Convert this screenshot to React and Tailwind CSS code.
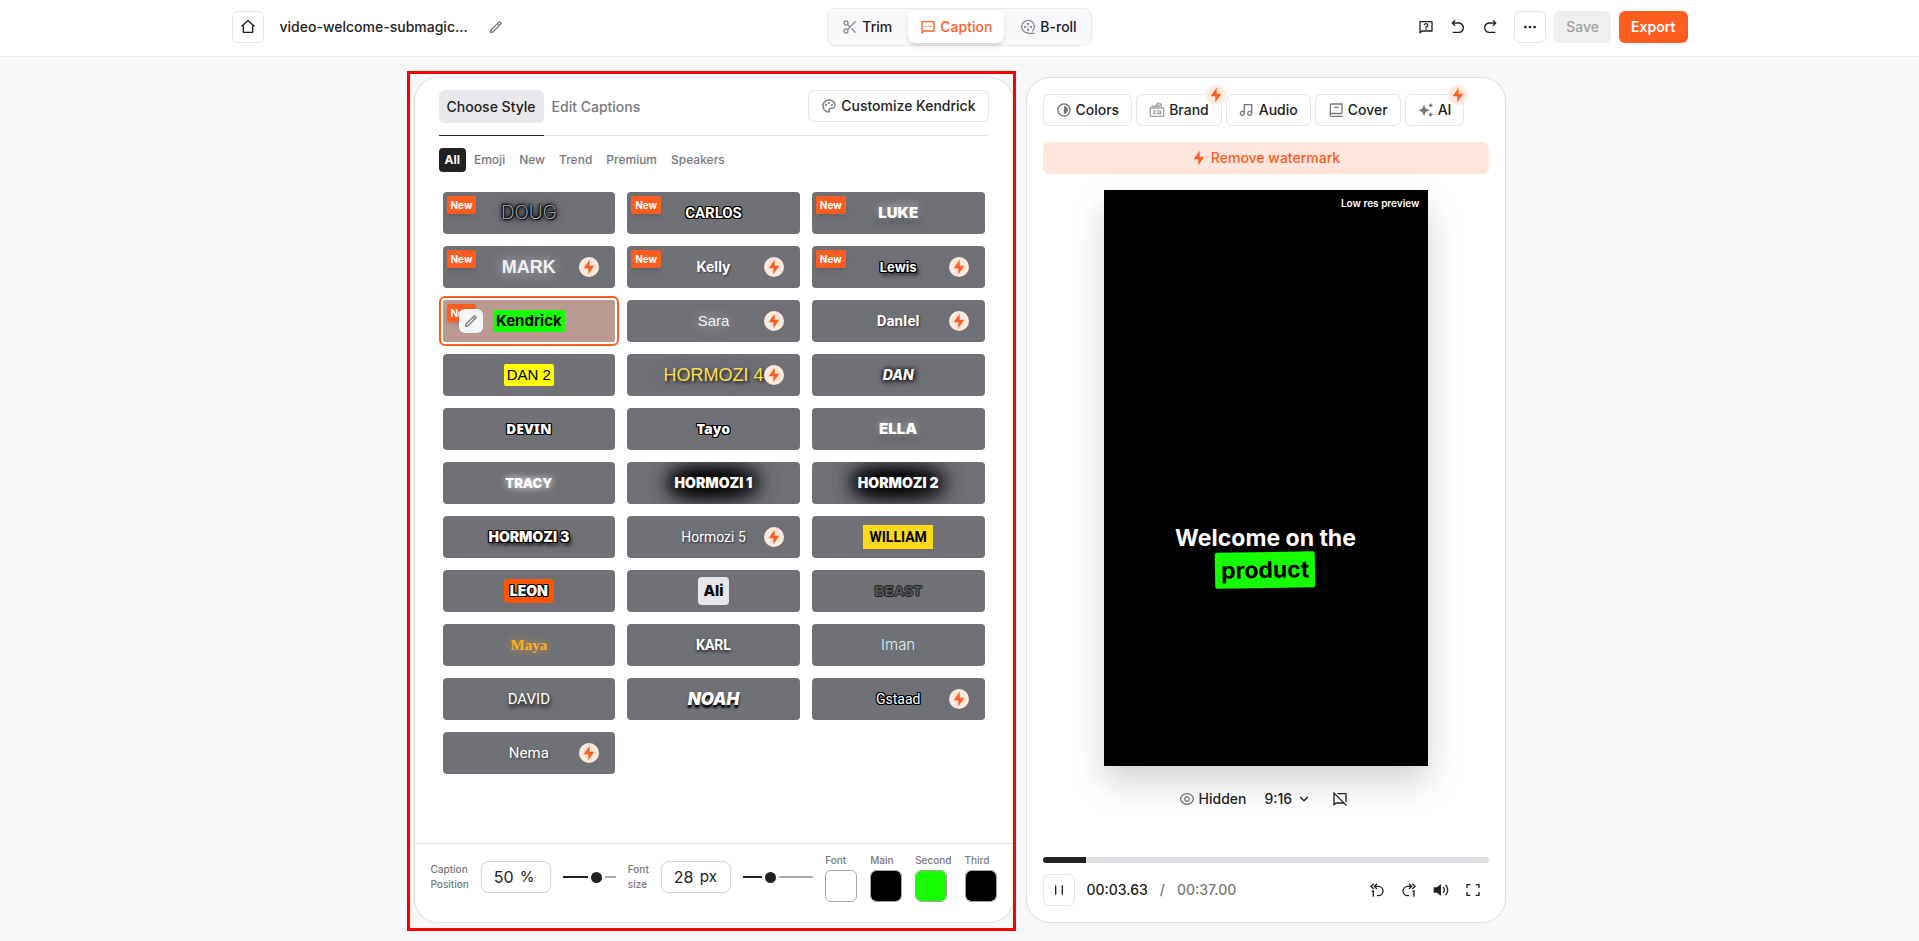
import React, { useState } from "react";
import {
  RiHome2Line,
  RiPencilLine,
  RiScissorsLine,
  RiMessage2Line,
  RiQuestionnaireLine,
  RiArrowGoBackLine,
  RiArrowGoForwardLine,
  RiMoreFill,
  RiPaletteLine,
  RiFlashlightFill,
  RiContrastLine,
  RiMusic2Line,
  RiEyeLine,
  RiArrowDownSLine,
  RiChatOffLine,
  RiPauseLine,
  RiVolumeUpFill,
  RiFullscreenLine,
} from "react-icons/ri";

const iconButton = "flex size-8 items-center justify-center rounded-md text-[#222]";
const outlined = "border border-[#e5e5e8] bg-white";

function ReelIcon() {
  return (
    <svg viewBox="0 0 24 24" className="size-4" fill="none" stroke="currentColor" strokeWidth="2" aria-hidden="true">
      <path d="M12 21a9.500 9.500 0 1 1 6.500-2.500M12 21.500h10" />
      <g fill="currentColor" stroke="none">
        <circle cx="12" cy="7.500" r="1.700" />
        <circle cx="7.500" cy="12" r="1.700" />
        <circle cx="16.500" cy="12" r="1.700" />
        <circle cx="12" cy="16.500" r="1.700" />
        <circle cx="12" cy="12" r="1" />
      </g>
    </svg>
  );
}

function BrandIcon() {
  return (
    <svg viewBox="0 0 24 24" className="size-4 text-[#a5a6ab]" fill="none" stroke="currentColor" strokeWidth="2" aria-hidden="true">
      <path d="M2 9h20v12.500H2z" />
      <path d="M3 9l3-3.500 3 2 4-5.500 5 1 1 6M9 7.500l5-3M12 8l5-3" />
      <path d="M11 13.200H7.500v4H11M13.500 13.200h4v4h-4z" />
    </svg>
  );
}

function CoverIcon() {
  return (
    <svg viewBox="0 0 24 24" className="size-4" fill="none" stroke="currentColor" strokeWidth="2" aria-hidden="true">
      <path d="M21 17V3H5a1.500 1.500 0 0 0-1.500 1.500V19.500A1.500 1.500 0 0 0 5 21.500h17M4 17.300h17M9 8h7" />
    </svg>
  );
}

function SparklesIcon() {
  return (
    <svg viewBox="0 0 24 24" className="size-4" fill="currentColor" aria-hidden="true">
      <path d="M9 4l2.600 5.900L17.500 12.500l-5.900 2.600L9 21l-2.600-5.900L.500 12.500l5.900-2.600z" />
      <path d="M19 1l1.200 2.800L23 5l-2.800 1.200L19 9l-1.200-2.800L15 5l2.800-1.200zM19 15l1.300 2.700L23 19l-2.700 1.300L19 23l-1.300-2.700L15 19l2.700-1.300z" />
    </svg>
  );
}

function BackOneIcon() {
  return (
    <svg viewBox="0 0 24 24" className="size-4" fill="none" stroke="currentColor" strokeWidth="2" aria-hidden="true">
      <path d="M7 2.500L3 6.500l4 4M12 2.500l-4 4 4 4M8.500 6.500H14a7 7 0 0 1 0 14h-2M4 14.500l2.500-1V22" />
    </svg>
  );
}

function ForwardOneIcon() {
  return (
    <svg viewBox="0 0 24 24" className="size-4" fill="none" stroke="currentColor" strokeWidth="2" aria-hidden="true">
      <path d="M17 2.500l4 4-4 4M12 2.500l4 4-4 4M15.500 6.500H10a7 7 0 0 0 0 14h2M17 14.500l2.500-1V22" />
    </svg>
  );
}

function FlashBadge({ className = "" }) {
  return (
    <span className={`flex size-5 items-center justify-center rounded-full bg-[#ffe9dc] text-[#ff5c1f] ${className}`}>
      <RiFlashlightFill className="size-4" />
    </span>
  );
}

const stroke =
  "[text-shadow:1px_0_#000,-1px_0_#000,0_1px_#000,0_-1px_#000,1px_1px_#000,-1px_-1px_#000,1px_-1px_#000,-1px_1px_#000]";
const strokeDrop =
  "[text-shadow:1px_0_#000,-1px_0_#000,0_1px_#000,0_-1px_#000,1px_1px_#000,-1px_-1px_#000,1px_-1px_#000,-1px_1px_#000,2px_3px_4px_#000]";
const halo =
  "[text-shadow:0_0_14px_#000,0_0_16px_#000,0_0_20px_#000,0_0_20px_#000,0_0_24px_#000,0_0_24px_#000,0_0_28px_#000]";
const inter = "font-['Inter',sans-serif]";
const arial = "font-['Liberation_Sans',sans-serif]";
const roboto = "font-['Roboto',sans-serif]";

const STYLES = [
  { name: "DOUG", isNew: true, cls: `${inter} text-[19px] font-extralight text-[#b9bbc0] [text-shadow:1px_1px_1px_#000,-1px_-1px_1px_#000,0_0_3px_#000,0_0_4px_#000,0_0_6px_#000,0_0_8px_#000]` },
  { name: "CARLOS", isNew: true, cls: `${roboto} text-[15px] font-bold text-white ${stroke}` },
  { name: "LUKE", isNew: true, cls: `${inter} text-[15px] font-black text-white [text-shadow:0_-2px_8px_#ffffff88,0_4px_8px_#0006]` },
  { name: "MARK", isNew: true, pro: true, cls: `${arial} text-lg font-bold text-[#f2f2f4] [text-shadow:0_0_14px_#fff8]` },
  { name: "Kelly", isNew: true, pro: true, cls: `${inter} text-sm font-bold text-white [text-shadow:1px_1px_2px_#0008]` },
  { name: "Lewis", isNew: true, pro: true, cls: `${inter} text-[13px] font-bold text-white ${strokeDrop}` },
  { name: "Kendrick", isNew: true, cls: `${inter} rounded-xs bg-[#15ff00] px-[3px] text-[15px] font-bold text-black` },
  { name: "Sara", pro: true, cls: `${arial} text-[15px] font-normal text-[#f2f2f4] [text-shadow:0_0_14px_#fff9]` },
  { name: "DanIel", pro: true, cls: `${roboto} text-[15px] font-bold text-white [text-shadow:1px_1px_2px_#0008]` },
  { name: "DAN 2", cls: `${arial} rounded-xs bg-[#ffff00] px-[3px] text-[15px] text-black` },
  { name: "HORMOZI 4", pro: true, cls: `${arial} text-lg text-[#f7df4a] [text-shadow:2px_2px_3px_#222,0_0_12px_#4a4a7088]` },
  { name: "DAN", cls: `${inter} text-sm font-extrabold italic text-white [text-shadow:0_0_4px_#000,1px_1px_6px_#000]` },
  { name: "DEVIN", cls: `font-['Noto_Sans',sans-serif] text-sm font-black text-white ${stroke}` },
  { name: "Tayo", cls: `font-['Noto_Sans',sans-serif] text-sm font-black text-white ${stroke}` },
  { name: "ELLA", cls: `${inter} text-[15px] font-black text-white [text-shadow:0_0_8px_#ffffff88,0_4px_8px_#0006]` },
  { name: "TRACY", cls: `${inter} text-[13px] font-black text-white [text-shadow:0_0_6px_#fff8,0_0_10px_#fff8]` },
  { name: "HORMOZI 1", cls: `${inter} text-sm font-black text-white ${halo}` },
  { name: "HORMOZI 2", cls: `${inter} text-sm font-black text-white ${halo}` },
  { name: "HORMOZI 3", cls: `${inter} text-sm font-black text-white ${strokeDrop}` },
  { name: "Hormozi 5", pro: true, cls: `${roboto} text-sm text-white [text-shadow:1px_1px_2px_#000a]` },
  { name: "WILLIAM", cls: `${roboto} bg-[#ffd91a] px-1.5 py-px text-sm font-bold text-black` },
  { name: "LEON", cls: `${inter} rounded-sm bg-[#ff5500] px-1.5 py-px text-sm font-black text-white ${stroke}` },
  { name: "Ali", cls: `${inter} rounded-sm bg-[#e7e5e9] px-[5px] py-[3px] text-[15px] font-extrabold text-black` },
  { name: "BEAST", cls: `${arial} text-sm font-bold text-[#55565b] [text-shadow:1px_0_#222,-1px_0_#222,0_1px_#222,0_-1px_#222]` },
  { name: "Maya", cls: "font-['Liberation_Serif',serif] text-[15px] font-bold text-[#ffb01c] [text-shadow:0_0_8px_#ffb01caa]" },
  { name: "KARL", cls: `${roboto} text-sm font-bold text-white [text-shadow:0_2px_3px_#000a]` },
  { name: "Iman", cls: `${inter} text-[15px] font-light text-[#dcf1f4]` },
  { name: "DAVID", cls: `${roboto} text-[15px] text-white [text-shadow:1px_3px_4px_#000]` },
  { name: "NOAH", cls: `${inter} text-[17px] font-black italic text-white [text-shadow:0_3px_2px_#000]` },
  { name: "Gstaad", pro: true, cls: `${roboto} text-sm text-white ${stroke}` },
  { name: "Nema", pro: true, cls: `${roboto} text-[15px] text-white [text-shadow:1px_1px_2px_#0008]` },
];

function StyleCard({ item, selected, onSelect }) {
  return (
    <div className="relative">
      <button
        type="button"
        onClick={onSelect}
        className={`flex h-[42px] w-full items-center justify-center overflow-hidden ${
          selected ? "rounded-xs bg-[#ba9a91] outline-2 outline-offset-2 outline-[#ff5c1f]" : "rounded-sm bg-[#707177]"
        }`}
      >
        <span className={`leading-[22px] whitespace-nowrap ${item.cls}`}>{item.name}</span>
      </button>
      {item.isNew && (
        <span className="pointer-events-none absolute top-1 left-1 rounded-xs bg-[#ff5c1f] px-1 text-[10px] leading-[18px] font-bold text-white shadow-md">
          New
        </span>
      )}
      {selected && (
        <button
          type="button"
          aria-label="Edit style"
          className="absolute top-[9px] left-4 flex size-6 items-center justify-center rounded-md bg-[#f5f5f8] text-[#808085]"
        >
          <RiPencilLine className="size-4" />
        </button>
      )}
      {item.pro && <FlashBadge className="pointer-events-none absolute top-[11px] right-4" />}
    </div>
  );
}

function Slider({ label, value, min, max, onChange, className }) {
  const pct = ((value - min) / (max - min)) * 100;
  return (
    <input
      type="range"
      aria-label={label}
      min={min}
      max={max}
      value={value}
      onChange={(e) => onChange(Number(e.target.value))}
      style={{ background: `linear-gradient(to right, #222 ${pct}%, #a9a9ae ${pct}%)` }}
      className={`h-0.5 min-w-0 cursor-pointer appearance-none [&::-webkit-slider-thumb]:size-[17px] [&::-webkit-slider-thumb]:appearance-none [&::-webkit-slider-thumb]:rounded-full [&::-webkit-slider-thumb]:border-3 [&::-webkit-slider-thumb]:border-white [&::-webkit-slider-thumb]:bg-[#222] ${className}`}
    />
  );
}

function NumberField({ id, value, unit, onChange }) {
  return (
    <span className="flex h-8 w-[70px] shrink-0 items-center rounded-lg border border-[#d4d4da] bg-white pl-3 text-base text-[#222] shadow-xs">
      <input
        id={id}
        type="text"
        inputMode="numeric"
        value={value}
        onChange={(e) => onChange(Number(e.target.value) || 0)}
        className="w-[26px] bg-transparent outline-none"
      />
      <span className="text-[15px]">{unit}</span>
    </span>
  );
}

function ColorField({ label, initial }) {
  const [color, setColor] = useState(initial);
  return (
    <label className="flex flex-col gap-0.5 text-[10px] leading-[15px] font-medium text-[#77787e]">
      {label}
      <input
        type="color"
        value={color}
        onChange={(e) => setColor(e.target.value)}
        className="size-8 cursor-pointer appearance-none rounded-md border border-[#a3a3a8] bg-white p-0 [&::-webkit-color-swatch]:rounded-[5px] [&::-webkit-color-swatch]:border-0 [&::-webkit-color-swatch-wrapper]:p-0"
      />
    </label>
  );
}

function Header() {
  return (
    <header className="border-b border-[#e8e8ef] bg-white">
      <div className="mx-auto grid h-14 max-w-[1456px] grid-cols-[1fr_auto_1fr] items-center pb-0.5">
        <div className="flex items-center">
          <a href="#home" aria-label="Home" className={`${iconButton} ${outlined}`}>
            <RiHome2Line className="size-4" />
          </a>
          <span className="ml-4 text-sm font-medium text-[#222]">video-welcome-submagic...</span>
          <button type="button" aria-label="Rename" className="ml-3 flex size-8 items-center justify-center text-[#808085]">
            <RiPencilLine className="size-4" />
          </button>
        </div>
        <nav className="flex items-center gap-1 rounded-lg border border-[#e8e8ef] bg-[#f8f8fb] p-0.5 text-sm font-medium text-[#1b1b2b]">
          <button type="button" className="flex h-8 items-center gap-1 rounded-lg px-3">
            <RiScissorsLine className="size-4 text-[#8b8c92]" />
            Trim
          </button>
          <button type="button" className="flex h-8 items-center gap-1 rounded-lg bg-white px-3 text-[#ff5c1f] shadow-md">
            <RiMessage2Line className="size-4" />
            Caption
          </button>
          <button type="button" className="flex h-8 items-center gap-1 rounded-lg px-3">
            <span className="text-[#8b8c92]">
              <ReelIcon />
            </span>
            B-roll
          </button>
        </nav>
        <div className="flex items-center justify-end gap-2 text-sm font-medium">
          <div className="flex">
            <button type="button" aria-label="Help" className={iconButton}>
              <RiQuestionnaireLine className="size-4" />
            </button>
            <button type="button" aria-label="Undo" className={iconButton}>
              <RiArrowGoBackLine className="size-4" />
            </button>
            <button type="button" aria-label="Redo" className={iconButton}>
              <RiArrowGoForwardLine className="size-4" />
            </button>
          </div>
          <button type="button" aria-label="More" className={`${iconButton} ${outlined}`}>
            <RiMoreFill className="size-4" />
          </button>
          <button type="button" className="h-8 rounded-md bg-[#efefef] px-3 text-[#a0a0a3]">
            Save
          </button>
          <button type="button" className="h-8 rounded-md bg-[#ff5c1f] px-3 font-semibold text-white">
            Export
          </button>
        </div>
      </div>
    </header>
  );
}

function StylePanel() {
  const [position, setPosition] = useState(50);
  const [size, setSize] = useState(28);
  const [selected, setSelected] = useState("Kendrick");
  return (
    <section className="relative flex w-[600px] flex-col rounded-3xl border border-[#dedee5] bg-white">
      <div className="flex flex-1 flex-col px-6 pt-3">
        <div className="flex items-start justify-between border-b border-[#e3e4e8] text-sm font-medium">
          <div className="flex">
            <div className="-mb-px border-b border-[#222] pb-3">
              <button type="button" className="h-[33px] rounded-md bg-[#e8e9ed] px-2 text-[#222]">
                Choose Style
              </button>
            </div>
            <button type="button" className="h-[33px] px-2 text-[#77787e]">
              Edit Captions
            </button>
          </div>
          <button type="button" className={`flex h-8 items-center gap-1 rounded-md px-3 text-[#222] ${outlined}`}>
            <RiPaletteLine className="size-4 text-[#77787e]" />
            Customize {selected}
          </button>
        </div>
        <div className="mt-3 flex gap-0.5 text-xs font-medium text-[#77787e]">
          <button type="button" className="h-6 rounded-sm bg-[#222] px-1.5 font-bold text-white">
            All
          </button>
          {["Emoji", "New", "Trend", "Premium", "Speakers"].map((c) => (
            <button key={c} type="button" className="h-6 px-1.5">
              {c}
            </button>
          ))}
        </div>
        <div className="mt-5 grid grid-cols-3 gap-3 px-1 pb-4">
          {STYLES.map((s) => (
            <StyleCard key={s.name} item={s} selected={s.name === selected} onSelect={() => setSelected(s.name)} />
          ))}
        </div>
      </div>
      <div className="flex h-[79px] items-center gap-3 border-t border-[#e3e4e8] px-4 pb-3">
        <label htmlFor="caption-position" className="text-[10px] leading-[15px] font-medium text-[#77787e]">
          Caption
          <br />
          Position
        </label>
        <NumberField id="caption-position" value={position} unit="%" onChange={setPosition} />
        <Slider label="Caption position" value={position} min={15} max={65} onChange={setPosition} className="flex-[52]" />
        <label htmlFor="font-size" className="text-[10px] leading-[15px] font-medium text-[#77787e]">
          Font
          <br />
          size
        </label>
        <NumberField id="font-size" value={size} unit="px" onChange={setSize} />
        <Slider label="Font size" value={size} min={10} max={60} onChange={setSize} className="flex-[69]" />
        <div className="flex gap-[13px]">
          <ColorField label="Font" initial="#ffffff" />
          <ColorField label="Main" initial="#000000" />
          <ColorField label="Second" initial="#15ff00" />
          <ColorField label="Third" initial="#000000" />
        </div>
      </div>
      <div className="pointer-events-none absolute -top-[7px] -right-[3px] -bottom-[9px] -left-2 border-3 border-[#ff0000]" />
    </section>
  );
}

function ToolButton({ icon, label, pro }) {
  return (
    <button type="button" className={`relative flex h-8 items-center gap-1 rounded-md px-3 text-sm font-medium text-[#222] ${outlined}`}>
      <span className="text-[#77787e]">{icon}</span>
      {label}
      {pro && <FlashBadge className="absolute -top-2.5 -right-[5px] z-10" />}
    </button>
  );
}

function PreviewPanel() {
  return (
    <section className="flex w-[480px] flex-col rounded-3xl border border-[#dedee5] bg-white p-4">
      <div className="flex gap-1">
        <ToolButton icon={<RiContrastLine className="size-4" />} label="Colors" />
        <ToolButton icon={<BrandIcon />} label="Brand" pro />
        <ToolButton icon={<RiMusic2Line className="size-4" />} label="Audio" />
        <ToolButton icon={<CoverIcon />} label="Cover" />
        <ToolButton icon={<SparklesIcon />} label="AI" pro />
      </div>
      <button type="button" className="mt-4 flex h-8 items-center justify-center gap-1 rounded-md bg-[#fee6dc] text-sm font-medium text-[#ff5c1f]">
        <RiFlashlightFill className="size-4" />
        Remove watermark
      </button>
      <div className="mt-4 flex aspect-[9/16] w-[324px] flex-col items-center self-center bg-black shadow-[0_16px_32px_#0000002e]">
        <span className="self-end pt-1 pr-2 text-[10px] leading-[18px] font-semibold text-white">Low res preview</span>
        <p className="mt-[312px] text-center text-[23px] leading-7 font-bold text-white">
          Welcome on the
          <br />
          <span className="inline-block -rotate-1 rounded-xs bg-[#15ff00] px-1.5 py-1 font-bold text-black">product</span>
        </p>
      </div>
      <div className="mt-[17px] flex h-8 items-center justify-center pl-1 text-sm font-medium text-[#222]">
        <button type="button" className="flex items-center gap-1">
          <RiEyeLine className="size-4 text-[#77787e]" />
          Hidden
        </button>
        <label className="ml-[18px] flex items-center">
          <select aria-label="Aspect ratio" defaultValue="9:16" className="w-8 appearance-none bg-transparent outline-none">
            <option>9:16</option>
            <option>1:1</option>
            <option>16:9</option>
          </select>
          <RiArrowDownSLine className="size-4" />
        </label>
        <button type="button" aria-label="Hide captions" className="ml-3 flex size-8 items-center justify-center">
          <RiChatOffLine className="size-4" />
        </button>
      </div>
      <div
        role="progressbar"
        aria-label="Playback position"
        aria-valuenow={3.63}
        aria-valuemin={0}
        aria-valuemax={37}
        className="mt-auto h-1.5 overflow-hidden rounded-full bg-[#dddee2]"
      >
        <div className="h-full bg-[#222]" style={{ width: `${(3.63 / 37) * 100}%` }} />
      </div>
      <div className="mt-[11px] flex items-center">
        <button type="button" aria-label="Pause" className={`${iconButton} ${outlined}`}>
          <RiPauseLine className="size-4" />
        </button>
        <span className="ml-3 text-sm font-medium text-[#222]">00:03.63</span>
        <span className="ml-3 text-sm font-medium text-[#77787e]">/</span>
        <span className="ml-3 text-sm font-medium text-[#77787e]">00:37.00</span>
        <div className="ml-auto flex">
          <button type="button" aria-label="Back one second" className={iconButton}>
            <BackOneIcon />
          </button>
          <button type="button" aria-label="Forward one second" className={iconButton}>
            <ForwardOneIcon />
          </button>
          <button type="button" aria-label="Volume" className={iconButton}>
            <RiVolumeUpFill className="size-4" />
          </button>
          <button type="button" aria-label="Fullscreen" className={iconButton}>
            <RiFullscreenLine className="size-4" />
          </button>
        </div>
      </div>
    </section>
  );
}

export default function App() {
  return (
    <div className="flex min-h-screen flex-col bg-[#f8f8fb] font-['Inter',sans-serif]">
      <Header />
      <main className="flex flex-1 justify-center gap-3 pt-5 pb-[18px]">
        <StylePanel />
        <PreviewPanel />
      </main>
    </div>
  );
}
